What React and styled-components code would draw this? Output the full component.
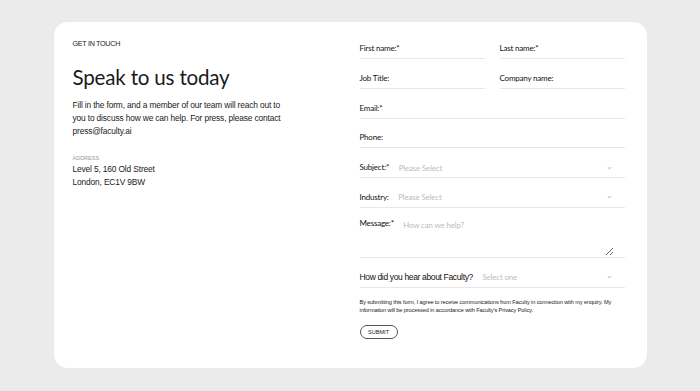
import React from 'react'
import styled, { createGlobalStyle } from 'styled-components'

const GlobalStyle = createGlobalStyle`
  html, body {
    margin: 0;
    padding: 0;
    background: #ebebeb;
  }
  body {
    font-family: 'Lato', 'Liberation Sans', sans-serif;
    color: #1a1a1a;
  }
`

const Page = styled.div`
  padding: 22px 0 23px;
  display: flex;
  justify-content: center;
`

const Card = styled.div`
  width: 593px;
  height: 346px;
  box-sizing: border-box;
  background: #fff;
  border-radius: 14px;
  padding: 17px 22px 0 19px;
  display: grid;
  grid-template-columns: 1fr 265px;
  column-gap: 22px;
`

const Info = styled.div`
  font-family: 'Liberation Sans', Arial, sans-serif;
`

const Eyebrow = styled.div`
  font-size: 7.2px;
  line-height: 10px;
  letter-spacing: -0.3px;
`

const Heading = styled.h1`
  font-family: 'Lato', sans-serif;
  font-weight: 400;
  font-size: 20.6px;
  line-height: 26px;
  margin: 15px 0 0;
  letter-spacing: -0.2px;
`

const Intro = styled.p`
  font-size: 8.4px;
  line-height: 13px;
  margin: 9px 0 0;
  max-width: 212px;
  letter-spacing: -0.15px;
`

const SmallLabel = styled.div`
  font-size: 5.5px;
  line-height: 10px;
  color: #9a9a9a;
  text-transform: uppercase;
  margin-top: 15px;
`

const Address = styled.div`
  font-size: 8.4px;
  line-height: 13px;
  letter-spacing: -0.15px;
`

const Form = styled.form`
  display: flex;
  flex-direction: column;
  gap: 9.8px;
`

const Pair = styled.div`
  display: grid;
  grid-template-columns: 1fr 1fr;
  column-gap: 15px;
`

const Field = styled.label`
  display: flex;
  align-items: ${p => (p.$top ? 'flex-start' : 'center')};
  height: ${p => p.$h || 19}px;
  border-bottom: 1px solid #e8e8e8;
  font-size: 8px;
  letter-spacing: -0.2px;
  color: #111;
  gap: 9.5px;
`

const Label = styled.span`
  white-space: nowrap;
  padding-top: ${p => p.$pt || 0}px;
  margin-top: -1px;
`

const Question = styled.span`
  white-space: nowrap;
  font-family: 'Liberation Sans', Arial, sans-serif;
  font-size: 8.5px;
  letter-spacing: -0.35px;
  margin-top: -1px;
`

const Placeholder = styled.span`
  flex: 1;
  color: #bdbdbd;
  font-size: 7.8px;
  letter-spacing: -0.1px;
`

const Chevron = styled.svg`
  width: 5px;
  height: 4px;
  margin-right: 13px;
  flex: none;
`

const Message = styled.textarea`
  flex: 1;
  align-self: stretch;
  border: none;
  outline: none;
  resize: vertical;
  padding: 2px 0 0;
  margin: 0 11px 1px 0;
  font-family: 'Lato', sans-serif;
  font-size: 7.8px;
  letter-spacing: -0.1px;
  background: transparent;
  &::placeholder {
    color: #bdbdbd;
  }
`

const Legal = styled.p`
  font-family: 'Liberation Sans', Arial, sans-serif;
  font-size: 5.6px;
  line-height: 8px;
  margin: 0.5px 0 0;
  letter-spacing: -0.1px;
  max-width: 262px;
`

const Submit = styled.button`
  align-self: flex-start;
  margin-top: 1px;
  width: 38px;
  height: 14.5px;
  padding: 0;
  border: 1px solid #555;
  border-radius: 8px;
  background: #fff;
  font-family: 'Liberation Sans', Arial, sans-serif;
  font-size: 5.6px;
  color: #1a1a1a;
`

const Caret = () => (
  <Chevron viewBox="0 0 5 4">
    <path d="M0.8 1.2 L2.5 2.8 L4.2 1.2" fill="none" stroke="#9a9a9a" strokeWidth="0.8" />
  </Chevron>
)

const SelectField = ({ label, placeholder }) => (
  <Field>
    {label}
    <Placeholder>{placeholder}</Placeholder>
    <Caret />
  </Field>
)

const App = () => (
  <Page>
    <GlobalStyle />
    <Card>
      <Info>
        <Eyebrow>GET IN TOUCH</Eyebrow>
        <Heading>Speak to us today</Heading>
        <Intro>
          Fill in the form, and a member of our team will reach out to you to discuss how we can
          help. For press, please contact press@faculty.ai
        </Intro>
        <SmallLabel>Address</SmallLabel>
        <Address>
          Level 5, 160 Old Street
          <br />
          London, EC1V 9BW
        </Address>
      </Info>
      <Form onSubmit={e => e.preventDefault()}>
        <Pair>
          <Field><Label>First name:*</Label></Field>
          <Field><Label>Last name:*</Label></Field>
        </Pair>
        <Pair>
          <Field><Label>Job Title:</Label></Field>
          <Field><Label>Company name:</Label></Field>
        </Pair>
        <Field><Label>Email:*</Label></Field>
        <Field><Label>Phone:</Label></Field>
        <SelectField label={<Label>Subject:*</Label>} placeholder="Please Select" />
        <SelectField label={<Label>Industry:</Label>} placeholder="Please Select" />
        <Field $top $h={39}>
          <Label $pt={1}>Message:*</Label>
          <Message placeholder="How can we help?" />
        </Field>
        <SelectField
          label={<Question>How did you hear about Faculty?</Question>}
          placeholder="Select one"
        />
        <Legal>
          By submitting this form, I agree to receive communications from Faculty in connection
          with my enquiry. My information will be processed in accordance with Faculty's Privacy
          Policy.
        </Legal>
        <Submit type="submit">SUBMIT</Submit>
      </Form>
    </Card>
  </Page>
)

export default App
